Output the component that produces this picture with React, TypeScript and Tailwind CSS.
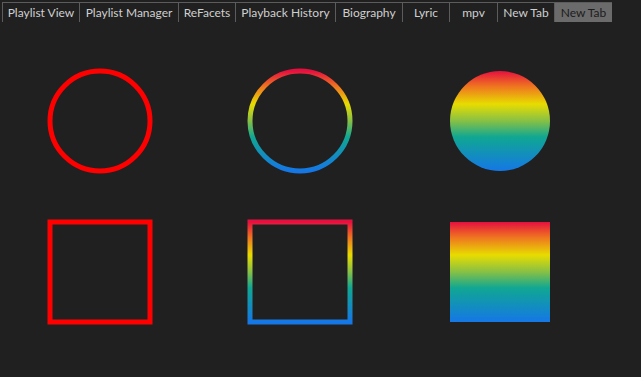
const tabs = [
  { label: "Playlist View", w: "w-[77px]" },
  { label: "Playlist Manager", w: "w-[99px]" },
  { label: "ReFacets", w: "w-[57px]" },
  { label: "Playback History", w: "w-[100px]" },
  { label: "Biography", w: "w-[67px]" },
  { label: "Lyric", w: "w-[47px]" },
  { label: "mpv", w: "w-[48px]" },
  { label: "New Tab", w: "w-[57px]" },
  { label: "New Tab", w: "w-[57px]", active: true },
];

function Rainbow({ id }: { id: string }) {
  return (
    <linearGradient id={id} x1="0" y1="0" x2="0" y2="1">
      <stop offset="0" stopColor="#e5103f" />
      <stop offset="0.15" stopColor="#ef7221" />
      <stop offset="0.33" stopColor="#e8dc00" />
      <stop offset="0.5" stopColor="#86c046" />
      <stop offset="0.66" stopColor="#10a792" />
      <stop offset="1" stopColor="#1577e6" />
    </linearGradient>
  );
}

function Shape({ kind, paint }: { kind: "circle" | "square"; paint: "red" | "stroke" | "fill" }) {
  const gid = `g-${kind}-${paint}`;
  const common =
    paint === "fill"
      ? { fill: `url(#${gid})` }
      : { fill: "none", stroke: paint === "red" ? "#ff0000" : `url(#${gid})`, strokeWidth: 5 };
  return (
    <svg width="110" height="110" viewBox="-5 -5 110 110">
      <defs>
        <Rainbow id={gid} />
      </defs>
      {kind === "circle" ? (
        <circle cx="50" cy="50" r="50" {...common} />
      ) : (
        <rect x="0" y="0" width="100" height="100" {...common} />
      )}
    </svg>
  );
}

export default function App() {
  return (
    <div className="w-[641px] h-[377px] bg-[#202020] overflow-hidden" style={{ fontFamily: "Lato, 'Liberation Sans', sans-serif" }}>
      {/* tab strip */}
      <div className="pt-[2px] pl-[2px]">
        <div className="flex w-max border-t border-l border-[#5c5c5c]">
          {tabs.map((t, i) => (
            <div
              key={i}
              className={`${t.w} h-[19px] flex items-center justify-center text-[12px] leading-none whitespace-nowrap ${
                t.active ? "bg-[#6b6b6b] text-[#1c1c1c]" : "border-r border-[#5c5c5c] text-[#cfcfcf]"
              }`}
            >
              {t.label}
            </div>
          ))}
        </div>
      </div>

      {/* shapes */}
      <div className="grid grid-cols-[200px_200px_200px] justify-items-center gap-y-[41px] mt-[44px]">
        <Shape kind="circle" paint="red" />
        <Shape kind="circle" paint="stroke" />
        <Shape kind="circle" paint="fill" />
        <Shape kind="square" paint="red" />
        <Shape kind="square" paint="stroke" />
        <Shape kind="square" paint="fill" />
      </div>
    </div>
  );
}
